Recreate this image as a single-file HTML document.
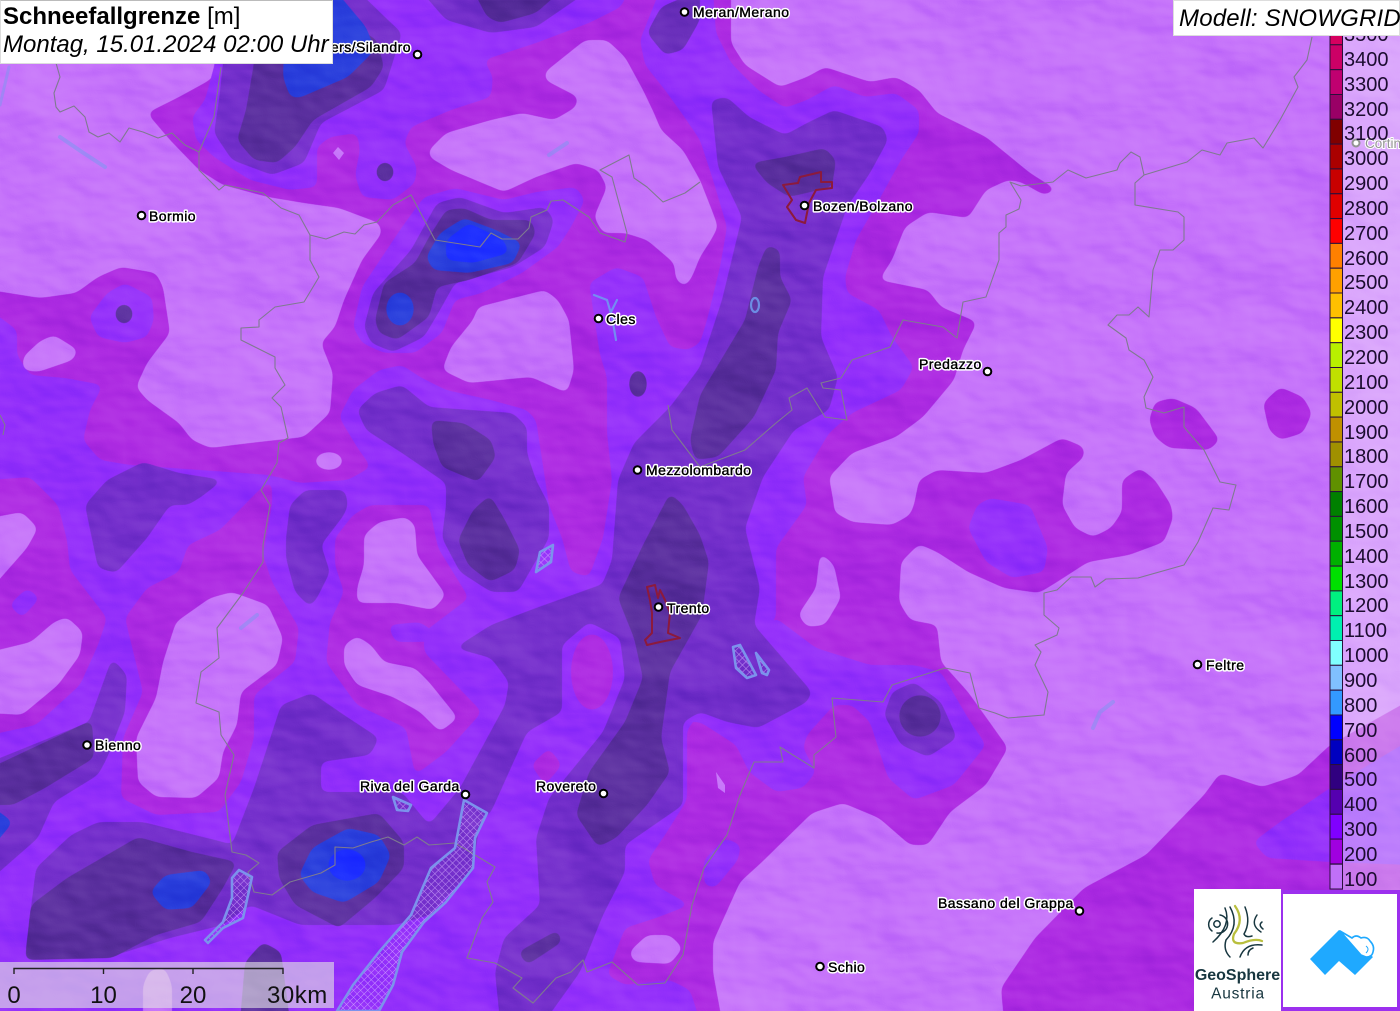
<!DOCTYPE html>
<html><head><meta charset="utf-8"><title>Schneefallgrenze</title>
<style>
html,body{margin:0;padding:0;background:#c674fa}
#w{position:relative;width:1400px;height:1011px;overflow:hidden}
svg{position:absolute;left:0;top:0}
.t{font-family:"Liberation Sans",sans-serif;font-size:14px;letter-spacing:.45px;fill:#000;stroke:#fff;stroke-width:3.2px;paint-order:stroke;stroke-linejoin:round}
.k{font-family:"Liberation Sans",sans-serif;font-size:14px;letter-spacing:.45px;fill:#000;stroke:#000;stroke-width:.35px}
.l{font-family:"Liberation Sans",sans-serif;font-size:20px;fill:#1c0c30}
.s{font-family:"Liberation Sans",sans-serif;font-size:24px;fill:#111}
.b{position:absolute;background:#fff;font-family:"Liberation Sans",sans-serif;font-size:24px;color:#000;white-space:nowrap;box-sizing:border-box}
</style></head><body><div id="w">
<svg width="1400" height="1011" viewBox="0 0 1400 1011">
<defs>
<filter id="r" filterUnits="userSpaceOnUse" x="-40" y="-40" width="1480" height="1091" color-interpolation-filters="sRGB">
<feGaussianBlur stdDeviation="4"/><feComponentTransfer><feFuncA type="linear" slope="12" intercept="-5.5"/></feComponentTransfer>
</filter>
<filter id="h" filterUnits="userSpaceOnUse" x="0" y="0" width="1400" height="1011" color-interpolation-filters="sRGB">
<feTurbulence type="fractalNoise" baseFrequency="0.008 0.014" numOctaves="4" seed="7"/>
<feDiffuseLighting surfaceScale="12" diffuseConstant="1" lighting-color="#fff"><feDistantLight azimuth="315" elevation="30"/></feDiffuseLighting>
</filter>
<pattern id="x" width="5" height="5" patternUnits="userSpaceOnUse" patternTransform="rotate(45)">
<path d="M0 0H5M0 0V5" stroke="#d9b4ff" stroke-width="1" opacity=".75"/></pattern>
</defs>

<rect width="1400" height="1011" fill="#9430fa"/>

<g filter="url(#r)" fill="#ad2be2">
<polygon points="-10,-10 660,-10 640,40 645,65 665,90 683,115 700,140 713,180 727,227 720,267 707,320 700,343 688,350 670,347 656,317 643,277 616,267 589,283 600,355 607,377 607,433 612,480 603,538 589,577 571,572 562,538 549,505 536,420 527,410 491,400 446,390 420,377 402,365 379,370 353,390 339,417 357,447 371,467 348,480 300,483 270,475 200,470 130,465 100,460 83,440 90,410 103,385 65,378 30,375 17,355 17,330 -10,310"/>
<polygon points="-10,480 30,477 58,505 67,540 70,570 107,618 98,645 80,685 36,725 -10,735"/>
<polygon points="272,480 272,505 263,555 272,582 299,628 295,662 254,695 254,738 241,782 219,812 156,815 121,798 123,738 143,692 125,618 147,588 179,572 188,545 220,530 259,490"/>
<polygon points="335,538 353,515 370,505 429,505 438,548 469,598 424,632 424,652 482,712 446,752 415,775 406,728 357,705 326,662 330,622 344,592 335,565"/>
<polygon points="713,-10 716,33 731,63 758,90 785,108 807,100 834,85 865,97 896,93 919,110 919,133 901,160 879,200 856,240 845,277 847,293 879,310 892,337 914,367 901,390 852,413 829,433 803,477 807,505 776,548 776,618 740,660 687,730 687,800 665,835 648,860 655,885 690,905 656,918 625,928 607,975 625,985 670,980 690,990 700,1021 1410,1021 1410,-10"/>
</g>

<g filter="url(#r)" fill="#c674fa">
<polygon points="-10,-10 223,-10 223,63 210,80 179,97 147,113 170,140 199,170 223,185 268,197 304,203 339,208 379,223 382,233 362,260 344,300 335,327 321,343 333,373 330,413 304,437 250,443 210,448 192,440 179,423 147,400 136,387 147,363 170,333 163,287 156,273 121,267 98,277 76,293 40,298 -10,290"/>
<polygon points="545,72 585,40 607,40 625,57 643,90 654,113 661,130 683,150 700,180 713,213 718,227 711,240 700,257 692,277 685,287 676,280 674,263 647,240 625,233 603,233 594,217 607,187 598,170 576,163 536,177 504,192 451,170 429,157 429,150 446,133 491,120 522,113 554,120 576,107 578,97 545,80"/>
<polygon points="478,307 545,290 558,300 569,320 574,370 567,393 531,377 469,383 442,370 451,347 473,320"/>
<polygon points="54,335 78,350 73,360 38,372 23,370 23,357 40,341"/>
<ellipse cx="329" cy="461" rx="14" ry="9"/>
<polygon points="22,512 38,528 27,548 -10,590 -10,518"/>
<polygon points="67,617 83,632 80,655 58,685 22,715 -10,713 -10,652 31,642 54,622"/>
<polygon points="232,592 268,605 283,638 277,665 241,692 237,725 223,752 219,778 196,798 156,797 138,782 136,738 156,698 163,662 176,622 210,598"/>
<polygon points="379,522 406,517 415,525 417,555 446,595 433,610 397,603 357,603 357,588 364,565 364,535"/>
<polygon points="357,636 371,645 384,662 415,668 429,682 458,718 440,732 420,712 393,697 357,685 344,665 344,645"/>
<polygon points="629,952 647,935 670,935 683,948 670,964 634,962"/>
<polygon points="150,970 165,968 172,985 172,1021 143,1021 143,985"/>
<polygon points="731,-10 731,43 745,65 780,87 807,77 825,67 870,82 896,77 919,90 937,113 986,137 1030,173 1057,190 1044,195 1021,182 1008,180 986,190 968,218 928,212 905,227 892,260 879,280 928,290 941,307 977,322 963,350 954,380 923,417 896,437 852,453 829,477 834,505 834,512 852,522 892,525 910,515 914,505 919,480 937,470 986,473 1021,460 1062,438 1084,447 1084,457 1066,473 1062,505 1066,512 1075,528 1093,537 1111,528 1122,512 1122,480 1140,468 1155,480 1171,505 1173,518 1164,542 1129,555 1088,562 1057,582 1039,593 1004,588 968,572 937,552 919,544 901,562 899,602 910,620 937,625 941,662 968,692 1008,748 986,785 950,812 928,845 910,845 879,818 843,803 812,813 762,862 740,882 713,942 713,972 722,1021 1004,1021 1001,988 1035,938 1084,888 1146,855 1204,795 1220,773 1262,787 1298,775 1330,745 1410,700 1410,-10"/>
</g>

<g filter="url(#r)" fill="#ad2be2">
<polygon points="1149,420 1155,402 1173,398 1196,408 1220,440 1209,450 1169,448 1155,437"/>
<polygon points="1263,403 1280,387 1303,397 1312,413 1303,433 1280,440 1269,430"/>
</g>
<g filter="url(#r)" fill="#c674fa">
<polygon points="820,552 834,565 841,598 825,625 807,627 798,615 816,588"/>
</g>
<polygon points="716,772 725,785 725,793 718,788" fill="#c674fa"/>
<polygon points="338,147 344,153 339,160 333,153" fill="#c674fa"/>

<g filter="url(#r)" fill="#9430fa">
<polygon points="215,-10 215,63 205,100 192,117 196,140 214,157 250,180 290,190 317,187 317,147 330,137 357,133 360,150 355,175 362,197 393,200 415,183 417,167 404,143 411,127 451,110 491,97 493,77 484,60 536,43 589,23 621,7 629,-10"/>
<polygon points="353,327 362,287 402,227 424,197 455,188 504,200 536,192 576,187 585,200 571,227 558,247 522,273 482,293 455,300 442,333 415,353 384,353 362,343"/>
<polygon points="89,317 107,293 125,283 152,297 154,320 147,337 125,343 98,337"/>
<polygon points="9,605 27,588 40,598 22,618"/>
<polygon points="388,625 420,622 446,640 420,642 395,642"/>
<polygon points="977,505 968,528 986,562 1012,578 1044,572 1048,548 1030,505 990,498"/>
<polygon points="776,618 816,648 870,665 914,665 941,672 968,718 986,745 954,785 914,800 888,778 870,722 852,705 834,705 807,735 803,748 816,772 803,788 776,792 749,772 736,745 700,722 680,722 690,680 740,640"/>
<polygon points="725,838 741,845 738,860 715,888 704,885 704,860"/>
<polygon points="1253,842 1280,822 1330,788 1410,740 1410,865 1330,862 1267,858"/>
</g>

<g filter="url(#r)" fill="#ad2be2">
<ellipse cx="592" cy="672" rx="21" ry="38"/>
<polygon points="531,765 549,748 562,765 545,785"/>
</g>

<g filter="url(#r)" fill="#7530cc">
<polygon points="223,63 219,100 214,133 232,160 272,175 304,163 321,123 384,90 402,33 388,20 357,-10 223,-10"/>
<polygon points="420,-10 446,20 491,33 536,27 590,-10"/>
<polygon points="364,327 373,293 411,250 437,203 460,197 504,213 545,207 554,220 545,247 513,267 455,283 440,310 424,337 393,352 371,343"/>
<polygon points="357,410 375,393 402,385 429,407 513,413 527,427 527,453 536,480 549,505 549,538 518,592 491,592 460,572 442,538 446,505 446,483 402,453 366,430"/>
<polygon points="85,505 107,480 143,462 179,473 223,480 201,497 188,505 170,505 147,538 116,573 98,568"/>
<polygon points="286,538 290,505 305,490 345,490 348,505 344,515 321,545 330,572 317,598 310,607 295,592 286,558"/>
<polygon points="-10,762 89,722 112,658 127,675 125,712 107,758 98,775 54,802 38,838 -10,880"/>
<polygon points="36,868 71,835 98,822 143,822 223,842 232,845 254,788 281,705 312,693 344,715 379,738 370,755 321,762 321,792 402,792 429,825 460,788 505,705 509,682 491,658 455,648 491,625 536,608 600,585 612,600 589,622 562,645 562,712 527,732 509,772 491,812 480,822 473,868 430,915 395,925 345,925 300,925 250,905 223,925 170,938 116,955 25,955"/>
<polygon points="711,100 727,97 749,117 785,135 807,123 834,110 883,127 888,140 870,173 847,207 823,277 821,337 838,377 829,410 794,430 763,477 745,528 760,588 754,625 812,692 807,702 758,728 727,722 700,712 683,722 683,805 625,845 625,872 603,915 580,972 545,1021 500,1021 495,972 504,938 540,905 536,838 549,798 603,732 625,678 620,638 589,622 600,590 612,560 618,480 634,443 670,407 700,367 722,300 742,217 718,167"/>
<polygon points="884,715 892,692 914,682 941,702 957,738 928,757 901,745"/>
<polygon points="647,33 661,7 700,-10 700,20 683,50 665,55" fill="#6a2fbb"/>
</g>

<g filter="url(#r)" fill="#5a2f9e">
<polygon points="237,140 254,160 277,163 295,147 313,120 371,87 384,67 377,40 339,17 313,-10 250,-10 254,63 246,110"/>
<polygon points="473,-10 487,17 500,23 536,13 562,-10"/>
<polygon points="375,320 384,283 415,263 429,237 446,210 464,208 491,220 531,220 536,233 518,263 469,280 437,287 429,317 397,340 379,333"/>
<polygon points="431,420 464,423 491,440 496,457 478,482 442,467 433,443"/>
<polygon points="458,540 473,510 490,495 505,520 520,550 515,570 490,582 468,565"/>
<polygon points="-10,768 92,720 94,758 45,788 13,805 -10,805"/>
<polygon points="618,598 643,545 670,493 683,505 700,535 709,562 702,615 670,672 661,738 670,772 647,805 616,838 598,847 576,815 589,772 625,722 643,678 634,638"/>
<polygon points="767,245 780,250 780,277 792,300 778,333 776,370 754,417 718,457 695,460 690,440 700,395 745,320 758,267"/>
<polygon points="751,163 785,157 825,148 836,160 832,187 789,197 767,183"/>
<polygon points="25,960 31,905 67,878 138,837 192,852 237,862 223,888 201,922 156,935 112,958"/>
<polygon points="277,852 312,825 379,813 404,842 404,868 375,898 339,928 295,905 279,878"/>
<polygon points="240,1021 245,962 263,942 281,952 290,1021"/>
<polygon points="518,952 558,930 562,942 527,965"/>
<ellipse cx="920" cy="716" rx="21" ry="21"/>
<ellipse cx="385" cy="172" rx="9" ry="10"/>
<ellipse cx="124" cy="314" rx="9" ry="10"/>
<ellipse cx="638" cy="384" rx="9" ry="14"/>
</g>

<g filter="url(#r)" fill="#2a3fdc">
<polygon points="283,77 290,97 299,98 348,77 375,50 366,27 335,-10 286,-10"/>
<polygon points="426,257 440,233 464,218 496,230 522,243 513,263 469,273 433,270"/>
<ellipse cx="400" cy="309" rx="14" ry="17"/>
<polygon points="150,892 165,875 205,870 212,882 192,908 165,910"/>
<polygon points="299,875 312,848 348,828 379,835 391,855 379,882 344,903 312,892"/>
<polygon points="-10,805 13,822 -10,850"/>
</g>
<g filter="url(#r)" fill="#1f30ff">
<polygon points="446,240 469,223 504,240 509,253 473,263 446,260"/>
<ellipse cx="347" cy="865" rx="19" ry="16"/>
</g>

<rect width="1400" height="1011" filter="url(#h)" style="mix-blend-mode:soft-light" opacity=".3"/>

<g fill="none" stroke="#7f7a90" stroke-width="1.1" stroke-linejoin="round">
<polyline points="56,63 60,77 54,93 56,107 60,112 74,106 85,117 89,132 98,137 109,133 120,142 129,128 143,132 158,138 172,133 185,145 199,152 199,170 219,190 225,185 263,193 281,208 299,215 310,235 326,239 344,232 355,234 364,225 377,222 393,205 411,195 435,240 480,247 491,233 502,239 518,239 529,228 531,217 547,210 551,201 563,200 589,217 600,233 625,242 627,233 612,177 600,170 629,155 634,178 647,187 663,202 685,193 700,182"/>
<polyline points="199,152 214,117 221,67"/>
<polyline points="310,235 310,260 319,277 304,302 275,307 259,320 259,327 241,328 241,340 275,357 275,368 285,385 272,398 281,407 288,438 279,443 277,463 261,490 270,505 263,545 263,562 243,593 217,628 219,658 201,672 196,703 219,712 221,735 234,755 225,795 232,852 246,855 259,863 248,872 254,892 272,895 290,882 321,873 335,865 335,847 353,848 371,842 388,837 404,845 417,837 429,845 455,843 495,867 487,882 493,902 482,918 467,958 495,963 522,978 513,988 533,1003 556,978 571,972 583,960 587,972 612,962 638,985 665,983 683,955 692,905 704,868 727,835 740,795 754,762 783,762 780,747 814,768 814,755 836,737 832,698 883,702 892,685 945,668 970,673 979,708 995,713 1008,718 1044,715 1048,692 1035,665 1041,652 1035,645 1057,635 1059,628 1044,615 1044,593 1057,590 1071,577 1091,577 1095,587 1106,579 1138,578 1184,565 1198,542 1213,508 1229,510 1236,485 1220,482 1204,450 1184,427 1184,407 1164,413 1146,408 1144,397 1153,377 1144,360 1129,350 1126,338 1108,325 1117,315 1129,315 1138,307 1149,317 1153,270 1160,250 1173,250 1184,240 1184,217 1178,212 1135,205 1135,183 1144,175 1140,157 1131,152 1120,163 1117,170 1086,178 1068,170 1053,182 1021,186 1010,182 1021,200 1019,209 1006,215 1006,227 999,233 999,260 986,297 963,302 957,338 943,327 903,320 890,347 852,360 841,378 821,383 823,388 841,390 847,420 825,417 807,388 789,398 792,410 776,423 745,450 700,467 672,430 668,405"/>
<polyline points="1144,175 1187,162 1202,150 1220,155 1227,143 1254,138 1263,148 1280,120 1298,87 1294,77 1307,60 1312,37"/>
<polyline points="0,415 5,425 3,435"/>
</g>

<g stroke="#7c92ec" stroke-width="2.6" stroke-linejoin="round" fill="url(#x)">
<polygon points="464,800 487,813 475,838 473,868 446,902 424,922 402,952 393,985 379,1011 337,1011 353,985 379,952 411,915 431,868 455,848"/>
<polygon points="239,870 252,877 243,918 223,928 208,943 205,940 223,922 232,898 232,878"/>
<polygon points="536,572 540,552 553,545 551,562"/>
<polygon points="393,797 411,805 408,811 397,810"/>
<polygon points="733,647 740,645 756,675 747,678 736,668"/>
<polygon points="756,653 769,670 767,675 762,673"/>
</g>
<g fill="none" stroke="#6f9cf0" stroke-width="2.2" stroke-linecap="round" opacity=".85">
<ellipse cx="755" cy="305" rx="4" ry="7"/>
<path d="M594 295L607 300 612 317 616 340M617 300L607 320"/>
<path d="M60 137L82 152 105 167" stroke-width="4" opacity=".55"/>
<path d="M549 155L567 143" stroke-width="4" opacity=".5"/>
<path d="M241 628L257 615" stroke-width="4" opacity=".5"/>
<path d="M1093 728L1100 712 1113 702" stroke-width="4" opacity=".5"/>
<path d="M0 105L9 67" stroke-width="3" opacity=".5"/>
</g>
<g fill="none" stroke="#8c1a3c" stroke-width="2" stroke-linejoin="round">
<polygon points="783,185 798,183 800,177 821,172 821,182 832,182 832,188 816,190 809,203 805,223 796,220 787,207 792,200"/>
<polygon points="647,587 655,585 658,598 660,590 665,600 670,613 668,633 680,638 660,642 647,645 645,640 652,633 652,613 650,600"/>
</g>

<g fill="#fff" stroke="#000" stroke-width="2">
<circle cx="684.5" cy="12" r="3.8"/><circle cx="417.5" cy="54.5" r="3.8"/><circle cx="141.5" cy="215.5" r="3.8"/><circle cx="804.5" cy="205.5" r="3.8"/><circle cx="598.5" cy="318.5" r="3.8"/><circle cx="987.5" cy="371.5" r="3.8"/><circle cx="637.5" cy="470" r="3.8"/><circle cx="658.5" cy="607" r="3.8"/><circle cx="1197.5" cy="664.5" r="3.8"/><circle cx="87" cy="745" r="3.8"/><circle cx="465.5" cy="794.5" r="3.8"/><circle cx="603.5" cy="793.5" r="3.8"/><circle cx="1079.5" cy="911" r="3.8"/><circle cx="820" cy="966.5" r="3.8"/>
</g>
<g>
<text class="t" x="693" y="17">Meran/Merano</text>
<text class="t" x="411" y="52" text-anchor="end">Schlanders/Silandro</text>
<text class="t" x="149" y="221">Bormio</text>
<text class="t" x="813" y="211">Bozen/Bolzano</text>
<text class="t" x="606" y="324">Cles</text>
<text class="t" x="919" y="369">Predazzo</text>
<text class="t" x="646" y="475">Mezzolombardo</text>
<text class="t" x="667" y="613">Trento</text>
<text class="t" x="1206" y="670">Feltre</text>
<text class="t" x="95" y="750">Bienno</text>
<text class="t" x="360" y="791">Riva del Garda</text>
<text class="t" x="536" y="791">Rovereto</text>
<text class="t" x="938" y="908">Bassano del Grappa</text>
<text class="t" x="828" y="972">Schio</text>
</g>
<g>
<text class="k" x="693" y="17">Meran/Merano</text>
<text class="k" x="411" y="52" text-anchor="end">Schlanders/Silandro</text>
<text class="k" x="149" y="221">Bormio</text>
<text class="k" x="813" y="211">Bozen/Bolzano</text>
<text class="k" x="606" y="324">Cles</text>
<text class="k" x="919" y="369">Predazzo</text>
<text class="k" x="646" y="475">Mezzolombardo</text>
<text class="k" x="667" y="613">Trento</text>
<text class="k" x="1206" y="670">Feltre</text>
<text class="k" x="95" y="750">Bienno</text>
<text class="k" x="360" y="791">Riva del Garda</text>
<text class="k" x="536" y="791">Rovereto</text>
<text class="k" x="938" y="908">Bassano del Grappa</text>
<text class="k" x="828" y="972">Schio</text>
</g>
<circle cx="1356" cy="143" r="3.5" fill="#fff" stroke="#555" stroke-width="2"/>
<text x="1365" y="148" font-family="Liberation Sans,sans-serif" font-size="13.5" fill="#555" stroke="#fff" stroke-width="2" paint-order="stroke">Cortina</text>

<rect x="1343" y="36" width="57" height="854" fill="#fff" opacity=".37"/>
<g stroke="#2a0f3c" stroke-width="1">
<rect x="1330" y="20" width="12.5" height="24.8" fill="#d6005f"/>
<rect x="1330" y="44.8" width="12.5" height="24.8" fill="#cc0066"/>
<rect x="1330" y="69.7" width="12.5" height="24.8" fill="#c00070"/>
<rect x="1330" y="94.5" width="12.5" height="24.8" fill="#990066"/>
<rect x="1330" y="119.3" width="12.5" height="24.8" fill="#800000"/>
<rect x="1330" y="144.1" width="12.5" height="24.8" fill="#aa0000"/>
<rect x="1330" y="168.9" width="12.5" height="24.8" fill="#c80000"/>
<rect x="1330" y="193.8" width="12.5" height="24.8" fill="#e00000"/>
<rect x="1330" y="218.6" width="12.5" height="24.8" fill="#ff0000"/>
<rect x="1330" y="243.4" width="12.5" height="24.8" fill="#ff8000"/>
<rect x="1330" y="268.2" width="12.5" height="24.8" fill="#ffa000"/>
<rect x="1330" y="293" width="12.5" height="24.8" fill="#ffc000"/>
<rect x="1330" y="317.9" width="12.5" height="24.8" fill="#ffff00"/>
<rect x="1330" y="342.7" width="12.5" height="24.8" fill="#b8f000"/>
<rect x="1330" y="367.5" width="12.5" height="24.8" fill="#c0e000"/>
<rect x="1330" y="392.3" width="12.5" height="24.8" fill="#c0c000"/>
<rect x="1330" y="417.1" width="12.5" height="24.8" fill="#c09000"/>
<rect x="1330" y="442" width="12.5" height="24.8" fill="#a09000"/>
<rect x="1330" y="466.8" width="12.5" height="24.8" fill="#609000"/>
<rect x="1330" y="491.6" width="12.5" height="24.8" fill="#008000"/>
<rect x="1330" y="516.4" width="12.5" height="24.8" fill="#009000"/>
<rect x="1330" y="541.2" width="12.5" height="24.8" fill="#00b000"/>
<rect x="1330" y="566.1" width="12.5" height="24.8" fill="#00e000"/>
<rect x="1330" y="590.9" width="12.5" height="24.8" fill="#00f080"/>
<rect x="1330" y="615.7" width="12.5" height="24.8" fill="#00f0b0"/>
<rect x="1330" y="640.5" width="12.5" height="24.8" fill="#80ffff"/>
<rect x="1330" y="665.3" width="12.5" height="24.8" fill="#80c0ff"/>
<rect x="1330" y="690.2" width="12.5" height="24.8" fill="#3399ff"/>
<rect x="1330" y="715" width="12.5" height="24.8" fill="#0000ff"/>
<rect x="1330" y="739.8" width="12.5" height="24.8" fill="#0000c0"/>
<rect x="1330" y="764.6" width="12.5" height="24.8" fill="#300080"/>
<rect x="1330" y="789.4" width="12.5" height="24.8" fill="#5500b0"/>
<rect x="1330" y="814.3" width="12.5" height="24.8" fill="#8000ff"/>
<rect x="1330" y="839.1" width="12.5" height="24.8" fill="#a000e0"/>
<rect x="1330" y="864.2" width="12.5" height="24.8" fill="#c070f8"/>
</g>
<g>
<text class="l" x="1344" y="41">3500</text><text class="l" x="1344" y="66">3400</text><text class="l" x="1344" y="91">3300</text><text class="l" x="1344" y="116">3200</text><text class="l" x="1344" y="140">3100</text><text class="l" x="1344" y="165">3000</text><text class="l" x="1344" y="190">2900</text><text class="l" x="1344" y="215">2800</text><text class="l" x="1344" y="240">2700</text><text class="l" x="1344" y="265">2600</text><text class="l" x="1344" y="289">2500</text><text class="l" x="1344" y="314">2400</text><text class="l" x="1344" y="339">2300</text><text class="l" x="1344" y="364">2200</text><text class="l" x="1344" y="389">2100</text><text class="l" x="1344" y="414">2000</text><text class="l" x="1344" y="439">1900</text><text class="l" x="1344" y="463">1800</text><text class="l" x="1344" y="488">1700</text><text class="l" x="1344" y="513">1600</text><text class="l" x="1344" y="538">1500</text><text class="l" x="1344" y="563">1400</text><text class="l" x="1344" y="588">1300</text><text class="l" x="1344" y="612">1200</text><text class="l" x="1344" y="637">1100</text><text class="l" x="1344" y="662">1000</text><text class="l" x="1344" y="687">900</text><text class="l" x="1344" y="712">800</text><text class="l" x="1344" y="737">700</text><text class="l" x="1344" y="762">600</text><text class="l" x="1344" y="786">500</text><text class="l" x="1344" y="811">400</text><text class="l" x="1344" y="836">300</text><text class="l" x="1344" y="861">200</text><text class="l" x="1344" y="886">100</text>
</g>

<rect x="0" y="962" width="334" height="46" fill="#e4e4e4" opacity=".62"/>
<path d="M14 974V968.5H283V974M103.5 968.5V974M193 968.5V974" fill="none" stroke="#222" stroke-width="1.4"/>
<text class="s" x="14" y="1003" text-anchor="middle">0</text>
<text class="s" x="103.5" y="1003" text-anchor="middle">10</text>
<text class="s" x="193" y="1003" text-anchor="middle">20</text>
<text class="s" x="267" y="1003" letter-spacing=".5">30km</text>

<rect x="1281" y="890" width="119" height="121" fill="#9c30ee"/>
<rect x="1283" y="894" width="114" height="113" fill="#fff"/>
<rect x="1194" y="889" width="87" height="122" fill="#fff"/>
<polygon points="1339,930 1310,959 1325,975 1339,961 1355,975 1373,957 1358,945" fill="#1fa9ff"/>
<path d="M1340 931L1352 938Q1356 934 1361 938Q1367 936 1370 941Q1375 946 1373 952Q1372 957 1366 957L1361 955Z" fill="#fff" stroke="#1fa9ff" stroke-width="1.6" stroke-linejoin="round"/>
<path d="M1366 946Q1370 949 1366 953" fill="none" stroke="#1fa9ff" stroke-width="1"/>
<g fill="none" stroke="#17363f" stroke-width="1.5" stroke-linecap="round">
<circle cx="1217" cy="924" r="3.2"/>
<path d="M1220 915A9 9 0 0 1 1217 933"/>
<path d="M1212 918A8 8 0 0 0 1212 931"/>
<path d="M1225 908Q1232 925 1213 942"/>
<path d="M1230 907Q1240 925 1226 940Q1223 950 1230 957"/>
<path d="M1245 907Q1251 922 1244 934Q1246 938 1252 936"/>
<path d="M1257 915Q1250 925 1261 932"/>
<path d="M1262 922Q1258 925 1263 929"/>
<path d="M1262 945Q1245 943 1240 957"/>
<path d="M1253 948Q1248 950 1248 955"/>
</g>
<path d="M1235 906Q1245 920 1234 934Q1230 945 1243 943Q1255 938 1262 941" fill="none" stroke="#b9bf3d" stroke-width="2.3" stroke-linecap="round"/>
<text x="1237.5" y="980" text-anchor="middle" font-family="Liberation Sans,sans-serif" font-weight="bold" font-size="16" fill="#17363f">GeoSphere</text>
<text x="1238" y="998.5" text-anchor="middle" font-family="Liberation Sans,sans-serif" font-size="15.5" letter-spacing=".8" fill="#17363f">Austria</text>
</svg>

<div class="b" style="left:0;top:0;width:333px;height:64px;border:1px solid #ddd;border-top-color:#bbb;padding:2px 0 0 2px;line-height:28px"><b>Schneefallgrenze</b> [m]<br><i>Montag, 15.01.2024 02:00 Uhr</i></div>
<div class="b" style="left:1173px;top:0;width:227px;height:36px;border:1px solid #ddd;padding:2px 0 0 5px;line-height:31px;letter-spacing:.2px"><i>Modell: SNOWGRID</i></div>
</div></body></html>
